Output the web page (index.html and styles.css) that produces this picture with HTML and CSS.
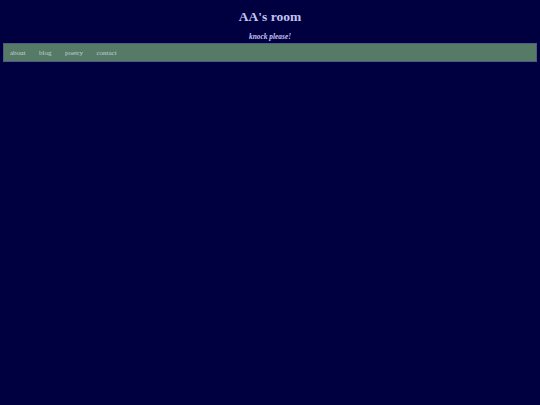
FILE: index.html
```html
<!DOCTYPE html>
<html>
<head>
<meta charset="utf-8">
<link rel="stylesheet" href="styles.css">
</head>
<body>
<header class="head">
  <h1 class="title">AA's room</h1>
  <p class="tagline">knock please!</p>
</header>
<nav class="nav">
  <a class="link" href="#">about</a>
  <a class="link" href="#">blog</a>
  <a class="link" href="#">poetry</a>
  <a class="link" href="#">contact</a>
</nav>
</body>
</html>
```
FILE: styles.css
```css
html, body {
  margin: 0;
  padding: 0;
  background: #000040;
  height: 100%;
}
body {
  font-family: "Liberation Serif", "Times New Roman", serif;
  padding: 0 3px;
}
.head {
  text-align: center;
  padding-top: 8px;
}
.title {
  margin: 0;
  font-size: 13.5px;
  line-height: 17px;
  font-weight: bold;
  color: #c4c4f4;
}
.tagline {
  margin: 7px 0 0 0;
  font-size: 7.4px;
  line-height: 10px;
  font-style: italic;
  font-weight: bold;
  color: #c4c4f4;
}
.nav {
  margin-top: 1px;
  background: #557a66;
  border: 1px solid #4c5c84;
  height: 17px;
  display: flex;
  align-items: center;
  padding-left: 6px;
  gap: 13.5px;
}
.link {
  font-size: 7px;
  color: #c4d0d8;
  text-decoration: none;
}
```
